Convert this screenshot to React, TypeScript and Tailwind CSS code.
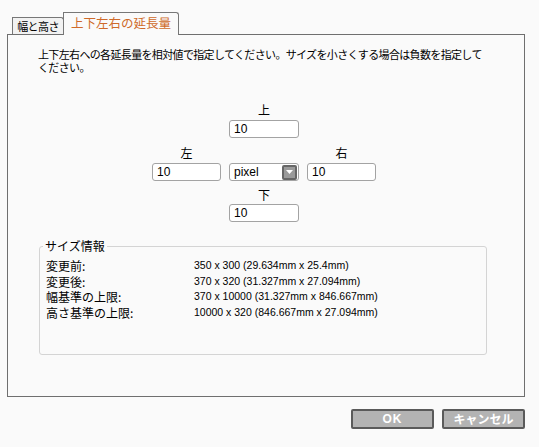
const jp = "font-['Noto_Sans_CJK_JP','Noto_Sans',sans-serif]";
const latin = "font-['Liberation_Sans',Arial,sans-serif]";

function NumberBox({ value }: { value: string }) {
  return (
    <div className={`h-[18px] rounded-[3px] border border-[#a3a3a3] bg-white pl-[4px] text-[12px] leading-[16px] text-black ${latin}`}>
      {value}
    </div>
  );
}

function UnitSelect() {
  return (
    <div className={`flex h-[18px] items-center justify-between rounded-[3px] border border-[#a3a3a3] bg-white pl-[4px] pr-[1px] text-[12px] leading-[16px] text-black ${latin}`}>
      <span>pixel</span>
      <span className="flex h-[15px] w-[15px] items-center justify-center rounded-[2px] border-2 border-[#666] bg-[#9a9a9a]">
        <svg width="7" height="4" viewBox="0 0 7 4">
          <polygon points="0,0 7,0 3.5,4" fill="#fff" />
        </svg>
      </span>
    </div>
  );
}

function Label({ text }: { text: string }) {
  return <div className={`h-[14px] text-center text-[12px] leading-[14px] text-black ${jp}`}>{text}</div>;
}

const sizeRows = [
  { label: '変更前:', value: '350 x 300 (29.634mm x 25.4mm)' },
  { label: '変更後:', value: '370 x 320 (31.327mm x 27.094mm)' },
  { label: '幅基準の上限:', value: '370 x 10000 (31.327mm x 846.667mm)' },
  { label: '高さ基準の上限:', value: '10000 x 320 (846.667mm x 27.094mm)' },
];

export default function App() {
  return (
    <div className="h-[447px] w-[539px] bg-[#fafafa] pl-[7px] pt-[12px] text-black">
      {/* Tabs */}
      <div className="flex items-end pl-[5px]">
        <div className={`flex h-[17px] w-[52px] items-center justify-center rounded-tr-[3px] border border-b-0 border-[#777] bg-[#f2f2f2] text-[11px] leading-none tracking-[-0.6px] ${jp}`}>
          幅と高さ
        </div>
        <div className={`relative z-10 -mb-px -ml-px flex h-[23px] w-[116px] items-center justify-center rounded-tr-[3px] border border-b-0 border-[#777] bg-[#fafafa] pb-[1px] text-[12.5px] leading-none text-[#cf6a2a] ${jp}`}>
          上下左右の延長量
        </div>
      </div>

      {/* Panel */}
      <div className="h-[363px] w-[518px] border border-[#6f6f6f] px-[7px]">
        <p className={`mt-[13px] whitespace-nowrap pl-[23px] text-[11px] leading-[13px] tracking-[-0.65px] ${jp}`}>
          上下左右への各延長量を相対値で指定してください。サイズを小さくする場合は負数を指定して
          <br />
          ください。
        </p>

        <div className="ml-[137px] mt-[29px] grid w-[224px] grid-cols-[69px_70px_69px] gap-x-[8px]">
          <div />
          <Label text="上" />
          <div />
          <div className="col-start-2 mt-[3px]">
            <NumberBox value="10" />
          </div>
          <div className="col-start-1 mt-[8px]">
            <Label text="左" />
          </div>
          <div className="col-start-3 mt-[8px]">
            <Label text="右" />
          </div>
          <div className="col-start-1 mt-[3px]">
            <NumberBox value="10" />
          </div>
          <div className="mt-[3px]">
            <UnitSelect />
          </div>
          <div className="mt-[3px]">
            <NumberBox value="10" />
          </div>
          <div className="col-start-2 mt-[7px]">
            <Label text="下" />
          </div>
          <div className="col-start-2 mt-[2px]">
            <NumberBox value="10" />
          </div>
        </div>

        <fieldset className="ml-[24px] mt-[18px] h-[115px] w-[448px] rounded-[3px] border border-[#d4d4d4] pl-[6px]">
          <legend className={`-ml-[3px] px-[2px] text-[12px] leading-[12px] ${jp}`}>サイズ情報</legend>
          <div className="mt-[6px] grid grid-cols-[148px_1fr]">
            {sizeRows.map((row) => (
              <div key={row.label} className="contents">
                <div className={`h-[15.7px] text-[12px] leading-[15.7px] ${jp}`}>{row.label}</div>
                <div className={`h-[15.7px] text-[10.5px] leading-[15.7px] ${latin}`}>{row.value}</div>
              </div>
            ))}
          </div>
        </fieldset>
      </div>

      {/* Buttons */}
      <div className="mt-[12px] flex w-[518px] justify-end gap-[8px]">
        <button className={`h-[20px] w-[83px] rounded-[2px] border-2 border-[#5a5a5a] bg-[#b3b3b3] text-[12px] font-bold leading-none tracking-[1px] text-white ${latin}`}>
          OK
        </button>
        <button className={`h-[20px] w-[83px] rounded-[2px] border-2 border-[#5a5a5a] bg-[#b3b3b3] text-[12px] font-bold leading-none text-white ${jp}`}>
          キャンセル
        </button>
      </div>
    </div>
  );
}
